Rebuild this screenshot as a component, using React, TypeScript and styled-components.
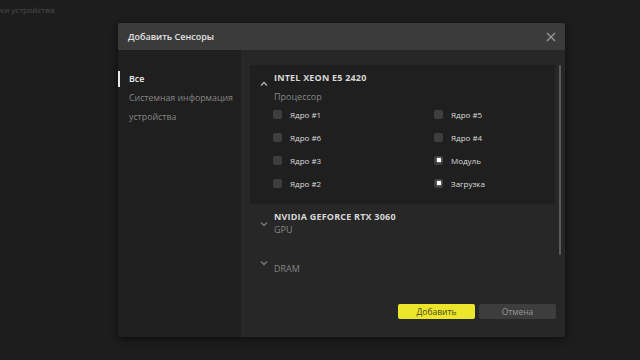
import React from "react";
import styled, { createGlobalStyle } from "styled-components";

type Sensor = { label: string; checked?: boolean };

const sensors: Sensor[] = [
  { label: "Ядро #1" },
  { label: "Ядро #5" },
  { label: "Ядро #6" },
  { label: "Ядро #4" },
  { label: "Ядро #3" },
  { label: "Модуль", checked: true },
  { label: "Ядро #2" },
  { label: "Загрузка", checked: true },
];

const GlobalStyle = createGlobalStyle`
  html, body {
    margin: 0;
    background: #1d1d1d;
    font-family: "Open Sans", "Liberation Sans", sans-serif;
    width: 640px;
    height: 360px;
    overflow: hidden;
  }
`;

const Chevron: React.FC<{ up?: boolean }> = ({ up }) => (
  <ChevronBox up={up}>
    <svg width="8" height="6" viewBox="0 0 8 6">
      <polyline
        points={up ? "1,4.5 4,1.5 7,4.5" : "1,1.5 4,4.5 7,1.5"}
        fill="none"
        stroke={up ? "#b5b5b5" : "#7a7a7a"}
        strokeWidth="1.3"
      />
    </svg>
  </ChevronBox>
);

const CloseIcon = () => (
  <svg width="10" height="10" viewBox="0 0 10 10">
    <path d="M1 1 L9 9 M9 1 L1 9" stroke="#9a9a9a" strokeWidth="1.2" />
  </svg>
);

export default function App() {
  return (
    <Page>
      <GlobalStyle />
      <GhostText>ки устройства</GhostText>
      <Modal>
        <Header>
          <Title>Добавить Сенсоры</Title>
          <CloseButton>
            <CloseIcon />
          </CloseButton>
        </Header>
        <Body>
          <Sidebar>
            <NavItem active>Все</NavItem>
            <NavItem>Системная информация</NavItem>
            <NavItem>устройства</NavItem>
          </Sidebar>
          <Content>
            <List>
              <Section expanded>
                <SectionHead expanded>
                  <Chevron up />
                  <HeadText>
                    <DeviceName>INTEL XEON E5 2420</DeviceName>
                    <DeviceType expanded>Процессор</DeviceType>
                  </HeadText>
                </SectionHead>
                <SensorGrid>
                  {sensors.map((s) => (
                    <SensorRow key={s.label}>
                      <Box>{s.checked && <Dot />}</Box>
                      <SensorLabel>{s.label}</SensorLabel>
                    </SensorRow>
                  ))}
                </SensorGrid>
              </Section>
              <Section>
                <SectionHead>
                  <Chevron />
                  <HeadText>
                    <DeviceName>NVIDIA GEFORCE RTX 3060</DeviceName>
                    <DeviceType>GPU</DeviceType>
                  </HeadText>
                </SectionHead>
              </Section>
              <Section>
                <SectionHead>
                  <Chevron />
                  <HeadText>
                    <DeviceName />
                    <DeviceType>DRAM</DeviceType>
                  </HeadText>
                </SectionHead>
              </Section>
            </List>
            <Scrollbar />
            <Footer>
              <PrimaryButton>Добавить</PrimaryButton>
              <SecondaryButton>Отмена</SecondaryButton>
            </Footer>
          </Content>
        </Body>
      </Modal>
    </Page>
  );
}

const Page = styled.div`
  display: flex;
  flex-direction: column;
  width: 640px;
  height: 360px;
`;

const GhostText = styled.div`
  height: 23px;
  padding-top: 4px;
  box-sizing: border-box;
  font-size: 8px;
  color: #4c4c4c;
`;

const Modal = styled.div`
  margin-left: 118px;
  width: 447px;
  height: 314px;
  display: flex;
  flex-direction: column;
  background: #272727;
  border-radius: 2px;
  box-shadow: 0 2px 8px rgba(0, 0, 0, 0.6);
  overflow: hidden;
`;

const Header = styled.div`
  height: 27px;
  flex-shrink: 0;
  display: flex;
  align-items: center;
  justify-content: space-between;
  padding: 0 9px 0 10px;
  background: #3b3b3b;
`;

const Title = styled.div`
  font-size: 9px;
  font-weight: 600;
  color: #e2e2e2;
`;

const CloseButton = styled.div`
  display: flex;
  align-items: center;
`;

const Body = styled.div`
  flex: 1;
  display: flex;
`;

const Sidebar = styled.div`
  width: 123px;
  flex-shrink: 0;
  background: #1f1f1f;
  padding-top: 21px;
  display: flex;
  flex-direction: column;
  gap: 3px;
`;

const NavItem = styled.div<{ active?: boolean }>`
  height: 16px;
  line-height: 16px;
  padding-left: 9px;
  font-size: 8.8px;
  color: ${(p) => (p.active ? "#f0f0f0" : "#858585")};
  font-weight: ${(p) => (p.active ? 600 : 400)};
  border-left: 2px solid ${(p) => (p.active ? "#e8e8e8" : "transparent")};
  white-space: nowrap;
`;

const Content = styled.div`
  flex: 1;
  position: relative;
  display: flex;
  flex-direction: column;
  padding: 15px 9px 0 9px;
`;

const List = styled.div`
  width: 305px;
  display: flex;
  flex-direction: column;
`;

const Section = styled.div<{ expanded?: boolean }>`
  background: ${(p) => (p.expanded ? "#1f1f1f" : "transparent")};
  padding-bottom: ${(p) => (p.expanded ? "14px" : "0")};
`;

const SectionHead = styled.div<{ expanded?: boolean }>`
  display: flex;
  align-items: center;
  padding: ${(p) => (p.expanded ? "6px" : "0")} 0 0 5px;
  height: ${(p) => (p.expanded ? "38px" : "39px")};
  box-sizing: border-box;
`;

const ChevronBox = styled.div<{ up?: boolean }>`
  width: 18px;
  display: flex;
  justify-content: center;
  margin-top: ${(p) => (p.up ? "-6px" : "0")};
`;

const HeadText = styled.div`
  display: flex;
  flex-direction: column;
  margin-left: 1px;
`;

const DeviceName = styled.div`
  font-size: 9px;
  font-weight: 700;
  color: #d8d8d8;
  height: 12px;
  line-height: 12px;
  letter-spacing: 0.2px;
`;

const DeviceType = styled.div<{ expanded?: boolean }>`
  font-size: 9px;
  color: #858585;
  margin-top: ${(p) => (p.expanded ? "7px" : "1px")};
  line-height: 12px;
`;

const SensorGrid = styled.div`
  display: grid;
  grid-template-columns: 161px 1fr;
  row-gap: 9px;
  padding: 4px 0 0 23px;
`;

const SensorRow = styled.div`
  display: flex;
  align-items: center;
  height: 14px;
`;

const Box = styled.div`
  width: 9px;
  height: 9px;
  border-radius: 2px;
  background: #3e3e3e;
  display: flex;
  align-items: center;
  justify-content: center;
`;

const Dot = styled.div`
  width: 4px;
  height: 4px;
  background: #ffffff;
  box-shadow: 0 0 2px rgba(255, 255, 255, 0.7);
`;

const SensorLabel = styled.div`
  margin-left: 8px;
  font-size: 8px;
  color: #dcdcdc;
`;

const Scrollbar = styled.div`
  position: absolute;
  left: 318px;
  top: 15px;
  width: 2px;
  height: 190px;
  background: #5a5a5a;
  border-radius: 1px;
`;

const Footer = styled.div`
  margin-top: auto;
  display: flex;
  justify-content: flex-end;
  gap: 4px;
  padding: 0 0 18px 0;
`;

const ButtonBase = styled.div`
  width: 77px;
  height: 15px;
  border-radius: 2px;
  display: flex;
  align-items: center;
  justify-content: center;
  font-size: 8.5px;
`;

const PrimaryButton = styled(ButtonBase)`
  background: #ece62a;
  color: #4a4a20;
`;

const SecondaryButton = styled(ButtonBase)`
  background: #3d3d3d;
  color: #959595;
`;
